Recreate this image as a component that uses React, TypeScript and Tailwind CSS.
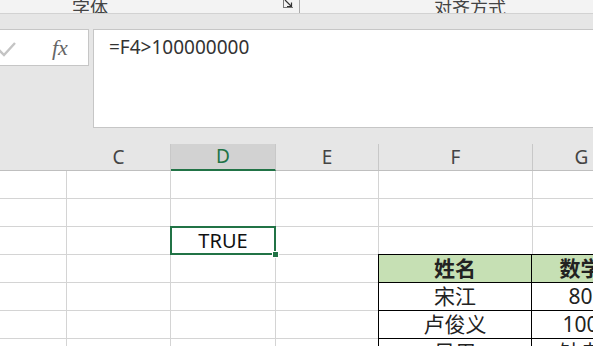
import React from "react";

const font = { fontFamily: '"Noto Sans", "Noto Sans CJK SC", sans-serif' };

const cols = ["w-[67px]", "w-[104px]", "w-[105px]", "w-[103px]", "w-[154px]", "w-[98px]"];
const letters = ["", "C", "D", "E", "F", "G"];

const table = [
  ["姓名", "数学"],
  ["宋江", "80"],
  ["卢俊义", "100"],
  ["吴用", "缺考"],
];

const Cell: React.FC<{ w: string }> = ({ w }) => (
  <div className={`${w} shrink-0 h-full border-r border-b border-[#d4d4d4]`} />
);

const App: React.FC = () => {
  const rows = [0, 1, 2, 3, 4, 5, 6];
  return (
    <div className="w-[593px] h-[346px] overflow-hidden bg-[#e6e6e6] text-[#222]" style={font}>
      {/* ribbon bottom */}
      <div className="h-[14px] bg-[#f3f3f3] border-b border-[#d2d2d2] flex items-end overflow-hidden">
        <div className="ml-[72px] w-[211px] text-[18px] leading-[18px] mb-[-4px] text-[#444] whitespace-nowrap">字体</div>
        <div className="self-start w-[10px] h-[8px] border-l border-b border-[#777] flex">
          <svg width="9" height="8" viewBox="0 0 9 8">
            <path d="M1 0 L7 6 M3 6.5 H7.5 V2.5" stroke="#333" strokeWidth="1.2" fill="none" />
          </svg>
        </div>
        <div className="ml-[6px] w-px h-[13px] bg-[#aaa] self-start" />
        <div className="ml-[134px] text-[18px] leading-[18px] mb-[-4px] text-[#444] whitespace-nowrap">对齐方式</div>
      </div>
      {/* formula bar */}
      <div className="flex items-start gap-[4px] pt-[15px]">
        <div className="w-[89px] h-[37px] bg-white border border-l-0 border-[#c6c6c6] flex items-center">
          <svg width="20" height="18" viewBox="0 0 20 18" className="-ml-[4px] mt-[4px]">
            <path d="M2 8 L8 14 L19 2" stroke="#c4c4c4" strokeWidth="2.4" fill="none" />
          </svg>
          <span className="ml-[36px] text-[22px] italic text-[#666]" style={{ fontFamily: '"Liberation Serif", serif' }}>
            fx
          </span>
        </div>
        <div className="flex-1 h-[99px] bg-white border border-r-0 border-[#c6c6c6] pl-[15px] pt-[3px]">
          <span className="text-[19px] text-[#333]">=F4&gt;100000000</span>
        </div>
      </div>
      {/* column headers */}
      <div className="flex h-[27px] mt-[16px] border-b border-[#bfbfbf]">
        {cols.map((w, i) => (
          <div
            key={i}
            className={`${w} shrink-0 flex items-end justify-center text-[19px] leading-[25px] border-r ${
              i === 0 ? "border-[#e6e6e6]" : "border-[#c8c8c8]"
            } ${i === 2 ? "bg-[#d2d2d2] text-[#217346] border-b-2 border-b-[#217346] -mb-px" : "text-[#444]"}`}
          >
            {letters[i]}
          </div>
        ))}
      </div>
      {/* grid */}
      <div className="bg-white">
        {rows.map((r) => (
          <div key={r} className="flex h-[28px]">
            {cols.map((w, i) => {
              if (r === 2 && i === 2) {
                return (
                  <div key={i} className={`${w} shrink-0 h-full relative border-b border-r border-[#d4d4d4]`}>
                    <div className="absolute -inset-px border-2 border-[#217346] flex items-center justify-center text-[20px] text-[#111]">
                      TRUE
                    </div>
                    <div className="absolute right-[-4px] bottom-[-4px] w-[7px] h-[7px] bg-[#217346] border border-white" />
                  </div>
                );
              }
              if (r >= 3 && i >= 4) {
                const t = table[r - 3]?.[i - 4] ?? "";
                return (
                  <div
                    key={i}
                    className={`${w} shrink-0 h-[29px] -mt-px border-t border-r border-black flex items-center justify-center text-[21px] whitespace-nowrap overflow-hidden ${
                      r === 3 ? "bg-[#c6e0b4] font-bold" : ""
                    } ${i === 4 ? "border-l -ml-px" : ""}`}
                  >
                    {t}
                  </div>
                );
              }
              return <Cell key={i} w={w} />;
            })}
          </div>
        ))}
      </div>
    </div>
  );
};

export default App;
